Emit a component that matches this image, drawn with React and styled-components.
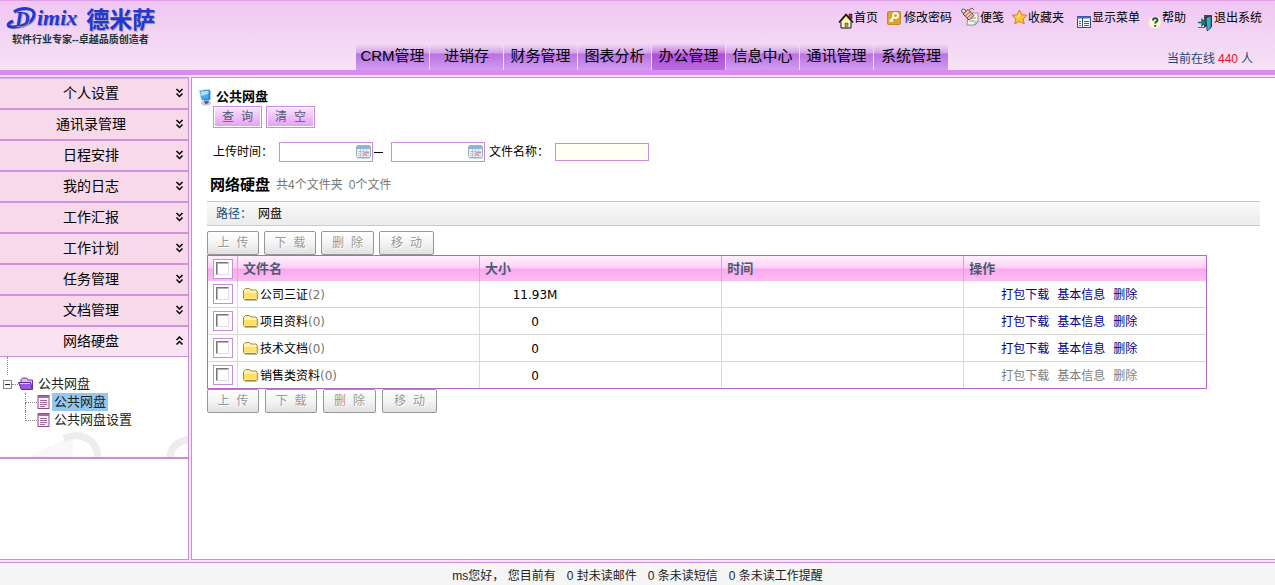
import React from "react";
import styled, { createGlobalStyle, css } from "styled-components";

const line = "#c98edb";
const sans = `"Liberation Sans", "Noto Sans CJK SC", sans-serif`;
const wide = `"DejaVu Sans", "Noto Sans CJK SC", sans-serif`;
const mono = `"Liberation Mono", "Noto Sans CJK SC", monospace`;

const Global = createGlobalStyle`
  *, *::before, *::after { box-sizing: border-box; }
  body { margin: 0; font: 12px/18px ${sans}; color: #000; background: #fff; }
  a { color: inherit; text-decoration: none; }
  button, input { font: inherit; margin: 0; padding: 0; }
  ul { list-style: none; margin: 0; padding: 0; }
`;

const Page = styled.div`
  min-height: 100vh;
  display: flex;
  flex-direction: column;
  background: #fbe0fb;
`;

/* ---------- header ---------- */
const Header = styled.header`
  border-top: 1px solid #e09fe6;
  border-bottom: 5px solid #d98cf0;
  background: linear-gradient(#f0c6f5, #f5e0f4 90%);
  margin-bottom: 2px;
`;
const HeaderTop = styled.div`
  height: 43px;
  display: flex;
  justify-content: space-between;
  align-items: flex-start;
`;
const Logo = styled.h1`
  margin: 0;
  padding: 3px 0 0 6px;
  font-weight: 700;
`;
const LogoName = styled.div`
  display: flex;
  align-items: center;
  height: 28px;
  margin-bottom: 2px;
  color: #2436d4;
  text-shadow: 1px 1px 1px #8f93a8;
  font: italic 700 22px/28px "Liberation Serif", serif;
`;
const LogoCjk = styled.span`
  font: 700 23px/24px "Noto Sans CJK SC", sans-serif;
  margin-left: 9px;
`;
const Tagline = styled.div`
  font: 700 10px/12px ${sans};
  color: #20353a;
  padding-left: 6px;
`;
const TopLinks = styled.nav`
  display: flex;
  gap: 8px;
  padding-right: 13px;
`;
const TopLink = styled.a`
  display: flex;
  align-items: center;
  height: 32px;
  line-height: 20px;
  white-space: nowrap;
  span { padding-top: 2px; }
`;
const HeaderBottom = styled.div`
  height: 26px;
  display: flex;
  justify-content: space-between;
  align-items: center;
  padding: 0 22px 0 356px;
`;
const Tabs = styled.nav`
  display: flex;
`;
const Tab = styled.a`
  width: 74px;
  height: 26px;
  border-right: 1px solid #f3d9f8;
  font-size: 15px;
  line-height: 24px;
  text-align: center;
  white-space: nowrap;
  background: ${(p) =>
    p.$active
      ? "linear-gradient(#efd0f5, #c57be0 9px, #ae4fd6 10px, #bd6be2)"
      : "linear-gradient(#f2daf6, #d3a2ea 9px, #ba72e0 10px, #cf9cf1)"};
  &:last-child { border-right: 0; }
`;
const Online = styled.div`
  display: flex;
  gap: 3px;
  padding-top: 3px;
  color: #274480;
  strong { font-weight: 400; color: #e8102a; }
`;

/* ---------- frame ---------- */
const Body = styled.div`
  flex: 1;
  display: flex;
  gap: 2px;
`;
const Side = styled.aside`
  flex: 0 0 189px;
  border: 1px solid ${line};
  border-left: 0;
  background: #fff;
`;
const Menu = styled.div`
  border-top: 1px solid #e0b4ee;
`;
const MenuItem = styled.button`
  width: 100%;
  height: 31px;
  display: flex;
  align-items: center;
  justify-content: flex-end;
  padding: 0 4px 1px 0;
  border: 0;
  border-bottom: 2px solid #cf92e2;
  background: ${(p) => (p.$open ? "#f9e3f0" : "#f7d9ea")};
  font-size: 14px;
  color: #000;
  span { flex: 1; padding-left: 7px; text-align: center; }
  &:last-child { height: 30px; border-bottom-width: 1px; }
`;
const Tree = styled.div`
  position: relative;
  height: 102px;
  border-bottom: 2px solid ${line};
  color: #222;
`;
const Watermark = styled.svg`
  position: absolute;
  right: 0;
  bottom: 0;
`;
const TreeStem = styled.div`
  height: 18px;
  margin-left: 7px;
  border-left: 1px dotted #888;
`;
const TreeRow = styled.div`
  display: flex;
  align-items: center;
  height: 18px;
  font-size: 13px;
`;
const Toggle = styled.button`
  width: 9px;
  height: 9px;
  margin-left: 3px;
  border: 1px solid #8a8a8a;
  background: linear-gradient(#222, #222) center / 5px 1px no-repeat #fff;
`;
const Dots = styled.span`
  width: 6px;
  border-top: 1px dotted #888;
`;
const Branch = styled.span`
  width: 12px;
  height: 18px;
  margin-left: 25px;
  display: flex;
  flex-direction: column;
  &::before {
    content: "";
    height: 10px;
    border-left: 1px dotted #888;
    border-bottom: 1px dotted #888;
  }
  &::after {
    content: "";
    flex: 1;
    border-left: ${(p) => (p.$last ? "0" : "1px dotted #888")};
  }
`;
const TreeLabel = styled.a`
  margin-left: 2px;
  padding: 0 2px;
  line-height: 18px;
  background: ${(p) => (p.$selected ? "#93c7f0" : "transparent")};
`;
const Main = styled.main`
  flex: 1;
  min-width: 0;
  border: 1px solid ${line};
  border-right: 0;
  background: #fff;
  padding: 10px 15px 10px;
`;

/* ---------- content ---------- */
const Title = styled.h2`
  display: flex;
  align-items: center;
  gap: 4px;
  height: 18px;
  margin: 0 0 0 -8px;
  font-size: 13px;
`;
const QueryButtons = styled.div`
  display: flex;
  gap: 4px;
  padding-left: 6px;
`;
const QueryButton = styled.button`
  width: 49px;
  height: 22px;
  padding-top: 2px;
  border: 1px solid ${line};
  box-shadow: inset 0 0 0 1px #fff;
  background: linear-gradient(#fbe6fd, #e39df5);
  color: #4f5a78;
  font: 12px/18px ${mono};
`;
const Filters = styled.form`
  display: flex;
  align-items: center;
  height: 20px;
  margin-top: 14px;
  padding-left: 6px;
  label { width: 66px; }
`;
const DateBox = styled.span`
  display: flex;
  align-items: center;
  width: 94px;
  height: 20px;
  border: 1px solid ${line};
  padding-right: 1px;
  input { flex: 1; min-width: 0; border: 0; outline: 0; background: none; }
  button { border: 0; background: none; display: flex; }
`;
const Dash = styled.span`
  width: 18px;
  padding-left: 1px;
  display: flex;
  &::before { content: ""; width: 9px; height: 1px; background: #000; }
`;
const NameInput = styled.input`
  width: 94px;
  height: 18px;
  border: 1px solid ${line};
  background: #fffff4;
`;
const NameLabel = styled.label`
  margin-left: 4px;
`;
const DiskHead = styled.div`
  display: flex;
  align-items: center;
  gap: 6px;
  height: 22px;
  margin-top: 12px;
  padding-left: 3px;
  color: #777;
  h3 { margin: 0; font-size: 15px; color: #000; }
`;
const PathBar = styled.div`
  display: flex;
  align-items: center;
  gap: 6px;
  height: 25px;
  margin: 5px 0;
  padding-left: 9px;
  border: solid #c9c9c9;
  border-width: 1px 0;
  background: linear-gradient(#f9f9f9, #ececec);
  span:first-child { color: #17507d; }
`;
const Actions = styled.div`
  display: flex;
  gap: ${(p) => (p.$loose ? "6px" : "5px")};
`;
const ActionButton = styled.button`
  width: ${(p) => p.$w || 52}px;
  height: 24px;
  padding-top: 2px;
  border: 1px solid #979797;
  border-radius: 2px;
  background: linear-gradient(#fff, #f4f4f4 50%, #e0e0e0);
  color: #999;
  text-shadow: 1px 1px 0 #fff;
  font: 12px/20px ${mono};
`;
const Table = styled.table`
  width: 95%;
  table-layout: fixed;
  border-collapse: separate;
  border-spacing: 0;
  border: 1px solid #b565c4;
`;
const cell = css`
  padding: 0 5px;
  border-right: 1px solid #dcd8dc;
  &:last-child { border-right: 0; }
`;
const Th = styled.th`
  ${cell}
  width: ${(p) => p.$w || "auto"};
  height: 25px;
  text-align: left;
  font-size: 13px;
  color: #4d5a70;
  border-right-color: #dd9ee4;
  background: linear-gradient(#fff0fd, #fdd0f6 12px, #fba8ef 13px, #fdbdf2);
`;
const Td = styled.td`
  ${cell}
  height: 27px;
  border-bottom: 1px solid #d6d6d6;
  tr:last-child > & { border-bottom: 0; }
  tr:last-child > & { height: 26px; }
`;
const Check = styled.input.attrs({ type: "checkbox" })`
  appearance: none;
  display: block;
  width: 20px;
  height: 20px;
  border: 1px solid ${line};
  padding: 2px;
  background: #fff;
  &::before {
    content: "";
    display: block;
    width: 13px;
    height: 13px;
    border: 1px solid #777;
    border-right-color: #dde;
    border-bottom-color: #dde;
    box-shadow: inset 1px 1px 0 #b5b5b5;
  }
  &:checked::before { background: #b565c4; }
`;
const FileName = styled.a`
  display: flex;
  align-items: center;
  padding-top: 2px;
  svg { margin: 0 1px 2px 0; }
  small { font: 12px/18px ${wide}; color: #777; }
`;
const Size = styled.div`
  width: 100px;
  padding-top: 2px;
  text-align: center;
  font-family: ${wide};
`;
const RowLinks = styled.div`
  display: flex;
  gap: 8px;
  padding: 2px 0 0 32px;
  color: ${(p) => (p.$muted ? "#808080" : "#00008b")};
`;
const Footer = styled.footer`
  margin-top: 2px;
  height: 23px;
  border-top: 1px solid ${line};
  background: #f5f5f5;
  display: flex;
  align-items: center;
  justify-content: center;
  gap: 11px;
  padding-top: 4px;
  color: #222;
`;

/* ---------- icons ---------- */
const TopIcon = ({ w, children }) => (
  <svg width={w} height="32" viewBox={`0 0 ${w} 32`} aria-hidden="true">{children}</svg>
);
const Home = () => (
  <TopIcon w={16}>
    <path d="M11 13h3v5h-3z" fill="#a02828" stroke="#301010" strokeWidth=".6" />
    <path d="M3 20l5-5.500 5 5.500v7H3z" fill="#fffad0" stroke="#111" />
    <path d="M1 21.500l7-8 7 8" fill="none" stroke="#111" strokeWidth="1.600" />
    <path d="M3 21l5-5.500 5 5.500" fill="none" stroke="#e8cf30" />
    <path d="M7 22h3v5H7z" fill="#c89020" stroke="#553" strokeWidth=".6" />
  </TopIcon>
);
const Key = () => (
  <TopIcon w={18}>
    <rect x="1.500" y="10.500" width="13" height="13" rx="1" fill="#d9a233" stroke="#c28a1e" />
    <circle cx="9.500" cy="14.500" r="2.500" fill="none" stroke="#fffbe0" strokeWidth="2" />
    <path d="M7.500 16.500L3.500 20.500M5 19l1.800 1.800" stroke="#fffbe0" strokeWidth="2" />
  </TopIcon>
);
const Note = () => (
  <TopIcon w={20}>
    <path d="M8 12h10v9l-3 3H7z" fill="#f4f6f2" stroke="#8b9488" />
    <path d="M10 17h6M9.500 20h5M15 24v-3h3" stroke="#8b9488" fill="none" />
    <path d="M3 13L8 8.500l6 6-5 4.500z" fill="#f3c3ae" stroke="#6d4038" />
    <path d="M5 15l6-5M7 17l6-5" stroke="#a85d50" />
    <circle cx="3.500" cy="10" r="2" fill="#eee" stroke="#555" />
    <path d="M9 9l3-2 2 2" fill="none" stroke="#8a4c44" />
  </TopIcon>
);
const Star = () => (
  <TopIcon w={16}>
    <path d="M7.500 9l2.200 4.700 5.300.6-3.900 3.500 1.100 5.200-4.700-2.600-4.700 2.600 1.100-5.200L0 14.300l5.300-.6z" fill="#ffc431" stroke="#e8781a" />
    <path d="M7.500 11.500l1.200 3-4 3z" fill="#fff0a0" />
  </TopIcon>
);
const MenuIcon = () => (
  <TopIcon w={20}>
    <rect x="5.500" y="15.500" width="13" height="11" fill="#fff" stroke="#334c94" />
    <path d="M5 16.500h14" stroke="#4a68b4" strokeWidth="2" />
    <path d="M10.500 17v9" stroke="#334c94" />
    <path d="M7 20.500h2M7 22.500h2M7 24.500h2M12 20.500h5M12 22.500h5M12 24.500h5" stroke="#465a88" />
  </TopIcon>
);
const Help = () => (
  <TopIcon w={14}>
    <circle cx="7" cy="21.500" r="6" fill="#fcfbc8" />
    <path d="M5 19.500c0-3 4.500-3 4.500-.3 0 1.800-2.300 1.500-2.300 3.300M7.200 24v1.700" stroke="#12455c" strokeWidth="1.800" fill="none" />
  </TopIcon>
);
const Exit = () => (
  <TopIcon w={20}>
    <path d="M10 14h8v12h-8z" fill="#40484c" />
    <path d="M12 17l5-2v12l-4 3z" fill="#35b4b0" stroke="#115" strokeWidth=".6" />
    <path d="M4 21.500h5M8 18.500l3.500 3-3.500 3z" fill="#109a90" stroke="#0a6d70" strokeWidth="1.400" />
    <path d="M4 26.500h7" stroke="#666" />
  </TopIcon>
);
const Chevrons = ({ up }) => (
  <svg width="9" height="10" viewBox="0 0 9 10" aria-hidden="true">
    <path
      d={up ? "M1.500 4l3-3 3 3M1.500 8.500l3-3 3 3" : "M1.500 1l3 3 3-3M1.500 5.500l3 3 3-3"}
      fill="none" stroke="#000" strokeWidth="1.500"
    />
  </svg>
);
const PurpleFolder = () => (
  <svg width="16" height="14" viewBox="0 0 16 14" aria-hidden="true">
    <path d="M3 12V2.500L4.500 1h4L10 3h4.500v9z" fill="#d9bcf5" stroke="#6a35a8" />
    <path d="M.500 5.500h12l2 7h-11z" fill="#9a58dc" stroke="#5e2a9c" />
    <path d="M2 6.500h10" stroke="#e0c4fa" />
  </svg>
);
const PageIcon = () => (
  <svg width="13" height="14" viewBox="0 0 13 14" aria-hidden="true">
    <rect x="1" y=".5" width="11" height="13" fill="#fbf0fb" stroke="#8d4a95" />
    <path d="M1 2h11" stroke="#a865b0" strokeWidth="2" />
    <path d="M3 5.500h7M3 7.500h7M3 9.500h7M3 11.500h5" stroke="#a9699f" />
  </svg>
);
const Computer = () => (
  <svg width="13" height="17" viewBox="0 0 13 17" aria-hidden="true">
    <ellipse cx="7" cy="14" rx="5" ry="2.500" fill="#c9c3de" />
    <path d="M4.500 10.500L10 10l-.5 4-3 1.500z" fill="#56619f" />
    <path d="M.500 1.500l9-1 2 1v9l-2 1-7-.5z" fill="#2f7fcb" stroke="#bcd5ec" strokeWidth=".8" />
    <path d="M1.500 2.500l8-.8v7.800l-6.500.3z" fill="#45aef0" />
    <path d="M1.500 2.500l8-.8v3L2.500 7z" fill="#a5e2fb" />
  </svg>
);
const Calendar = () => (
  <svg width="15" height="14" viewBox="0 0 15 14" aria-hidden="true">
    <rect x=".5" y=".5" width="14" height="12" rx="1" fill="#eef3fa" stroke="#9db0c9" />
    <path d="M1 2.500h13" stroke="#8fb2df" strokeWidth="3" />
    <path d="M2 6.500h11M2 8.500h11M2 10.500h11M4.500 4v8M7.500 4v8M10.500 4v8" stroke="#b9c7dc" />
    <path d="M8 7h2v1H8zM8 9h2v1H8zM11 7h2v1h-2z" fill="#e58c7e" />
    <path d="M1 13.500h13" stroke="#cfd6e0" />
  </svg>
);
const Folder = () => (
  <svg width="16" height="14" viewBox="0 0 16 14" aria-hidden="true">
    <path d="M.500 11.500V3.500L2.500 1.500h4L8 3h5l1 1v7.500l-1 1H1.500z" fill="#fff0a4" stroke="#a8892c" />
    <path d="M1 5.500h12.500v6H1z" fill="#ffe168" />
    <path d="M1 5h12.500" stroke="#fffbd8" />
    <path d="M2 13.300h12l.8-1V5" fill="none" stroke="#85857a" strokeWidth=".7" />
  </svg>
);

const topLinks = [
  ["首页", Home], ["修改密码", Key], ["便笺", Note], ["收藏夹", Star],
  ["显示菜单", MenuIcon], ["帮助", Help], ["退出系统", Exit],
];
const tabs = ["CRM管理", "进销存", "财务管理", "图表分析", "办公管理", "信息中心", "通讯管理", "系统管理"];
const menu = ["个人设置", "通讯录管理", "日程安排", "我的日志", "工作汇报", "工作计划", "任务管理", "文档管理", "网络硬盘"];
const files = [
  ["公司三证", 2, "11.93M"], ["项目资料", 0, "0"], ["技术文档", 0, "0"], ["销售类资料", 0, "0"],
];

const DateField = ({ id, label }) => (
  <DateBox>
    <input id={id} type="text" aria-label={label} />
    <button type="button" aria-label="选择日期"><Calendar /></button>
  </DateBox>
);
const ActionBar = ({ loose }) => (
  <Actions $loose={loose}>
    <ActionButton disabled>上 传</ActionButton>
    <ActionButton disabled>下 载</ActionButton>
    <ActionButton disabled $w={53}>删 除</ActionButton>
    <ActionButton disabled $w={55}>移 动</ActionButton>
  </Actions>
);

export default function App() {
  return (
    <Page>
      <Global />
      <Header>
        <HeaderTop>
          <Logo>
            <LogoName>
              <svg width="31" height="28" viewBox="0 0 31 28">
                <path d="M8 8C15 3 29 3 28 11c-1 8-13 12-21 12-6 0-7-3 0-6" transform="translate(1 1)" fill="none" stroke="#9a9cb4" strokeWidth="2.500" />
                <path d="M8 8C15 3 29 3 28 11c-1 8-13 12-21 12-6 0-7-3 0-6" fill="none" stroke="#2436d4" strokeWidth="3" />
                <text x="9" y="22" fontSize="20" fill="#2436d4">D</text>
              </svg>
              <span>imix</span>
              <LogoCjk>德米萨</LogoCjk>
            </LogoName>
            <Tagline>软件行业专家--卓越品质创造者</Tagline>
          </Logo>
          <TopLinks>
            {topLinks.map(([t, Icon]) => (
              <TopLink href="#" key={t}><Icon /><span>{t}</span></TopLink>
            ))}
          </TopLinks>
        </HeaderTop>
        <HeaderBottom>
          <Tabs>
            {tabs.map((t) => <Tab href="#" key={t} $active={t === "办公管理"}>{t}</Tab>)}
          </Tabs>
          <Online>当前在线 <strong>440</strong> 人</Online>
        </HeaderBottom>
      </Header>
      <Body>
        <Side>
          <Menu>
            {menu.map((t) => (
              <MenuItem key={t} $open={t === "网络硬盘"}>
                <span>{t}</span><Chevrons up={t === "网络硬盘"} />
              </MenuItem>
            ))}
          </Menu>
          <Tree>
            <Watermark width="170" height="26" viewBox="0 0 170 26" aria-hidden="true">
              <path d="M10 26L55 4v22z" fill="#f8f7f9" />
              <path d="M46 8c12-8 34-2 34 20" fill="none" stroke="#efedec" strokeWidth="7" />
              <path d="M152 28c0-12 8-18 20-20" fill="none" stroke="#efedec" strokeWidth="7" />
            </Watermark>
            <TreeStem />
            <TreeRow>
              <Toggle aria-label="折叠" /><Dots /><PurpleFolder />
              <TreeLabel href="#">公共网盘</TreeLabel>
            </TreeRow>
            <TreeRow>
              <Branch /><PageIcon />
              <TreeLabel href="#" $selected>公共网盘</TreeLabel>
            </TreeRow>
            <TreeRow>
              <Branch $last /><PageIcon />
              <TreeLabel href="#">公共网盘设置</TreeLabel>
            </TreeRow>
          </Tree>
        </Side>
        <Main>
          <Title><Computer />公共网盘</Title>
          <QueryButtons>
            <QueryButton type="submit" form="filters">查 询</QueryButton>
            <QueryButton type="reset" form="filters">清 空</QueryButton>
          </QueryButtons>
          <Filters id="filters" onSubmit={(e) => e.preventDefault()}>
            <label htmlFor="from">上传时间：</label>
            <DateField id="from" label="上传时间" />
            <Dash />
            <DateField id="to" label="上传时间" />
            <NameLabel htmlFor="fname">文件名称：</NameLabel>
            <NameInput id="fname" />
          </Filters>
          <DiskHead>
            <h3>网络硬盘</h3>
            <span>共4个文件夹</span>
            <span>0个文件</span>
          </DiskHead>
          <PathBar><span>路径：</span><span>网盘</span></PathBar>
          <ActionBar />
          <Table>
            <thead>
              <tr>
                <Th $w="30px"><Check aria-label="全选" /></Th>
                <Th>文件名</Th><Th>大小</Th><Th>时间</Th><Th>操作</Th>
              </tr>
            </thead>
            <tbody>
              {files.map(([name, count, size], i) => (
                <tr key={name}>
                  <Td><Check aria-label={name} /></Td>
                  <Td><FileName href="#"><Folder />{name}<small>({count})</small></FileName></Td>
                  <Td><Size>{size}</Size></Td>
                  <Td />
                  <Td>
                    <RowLinks $muted={i === files.length - 1}>
                      <a href="#">打包下载</a><a href="#">基本信息</a><a href="#">删除</a>
                    </RowLinks>
                  </Td>
                </tr>
              ))}
            </tbody>
          </Table>
          <ActionBar loose />
        </Main>
      </Body>
      <Footer>
        <span>ms您好， 您目前有</span>
        <span>0 封未读邮件</span>
        <span>0 条未读短信</span>
        <span>0 条未读工作提醒</span>
      </Footer>
    </Page>
  );
}
